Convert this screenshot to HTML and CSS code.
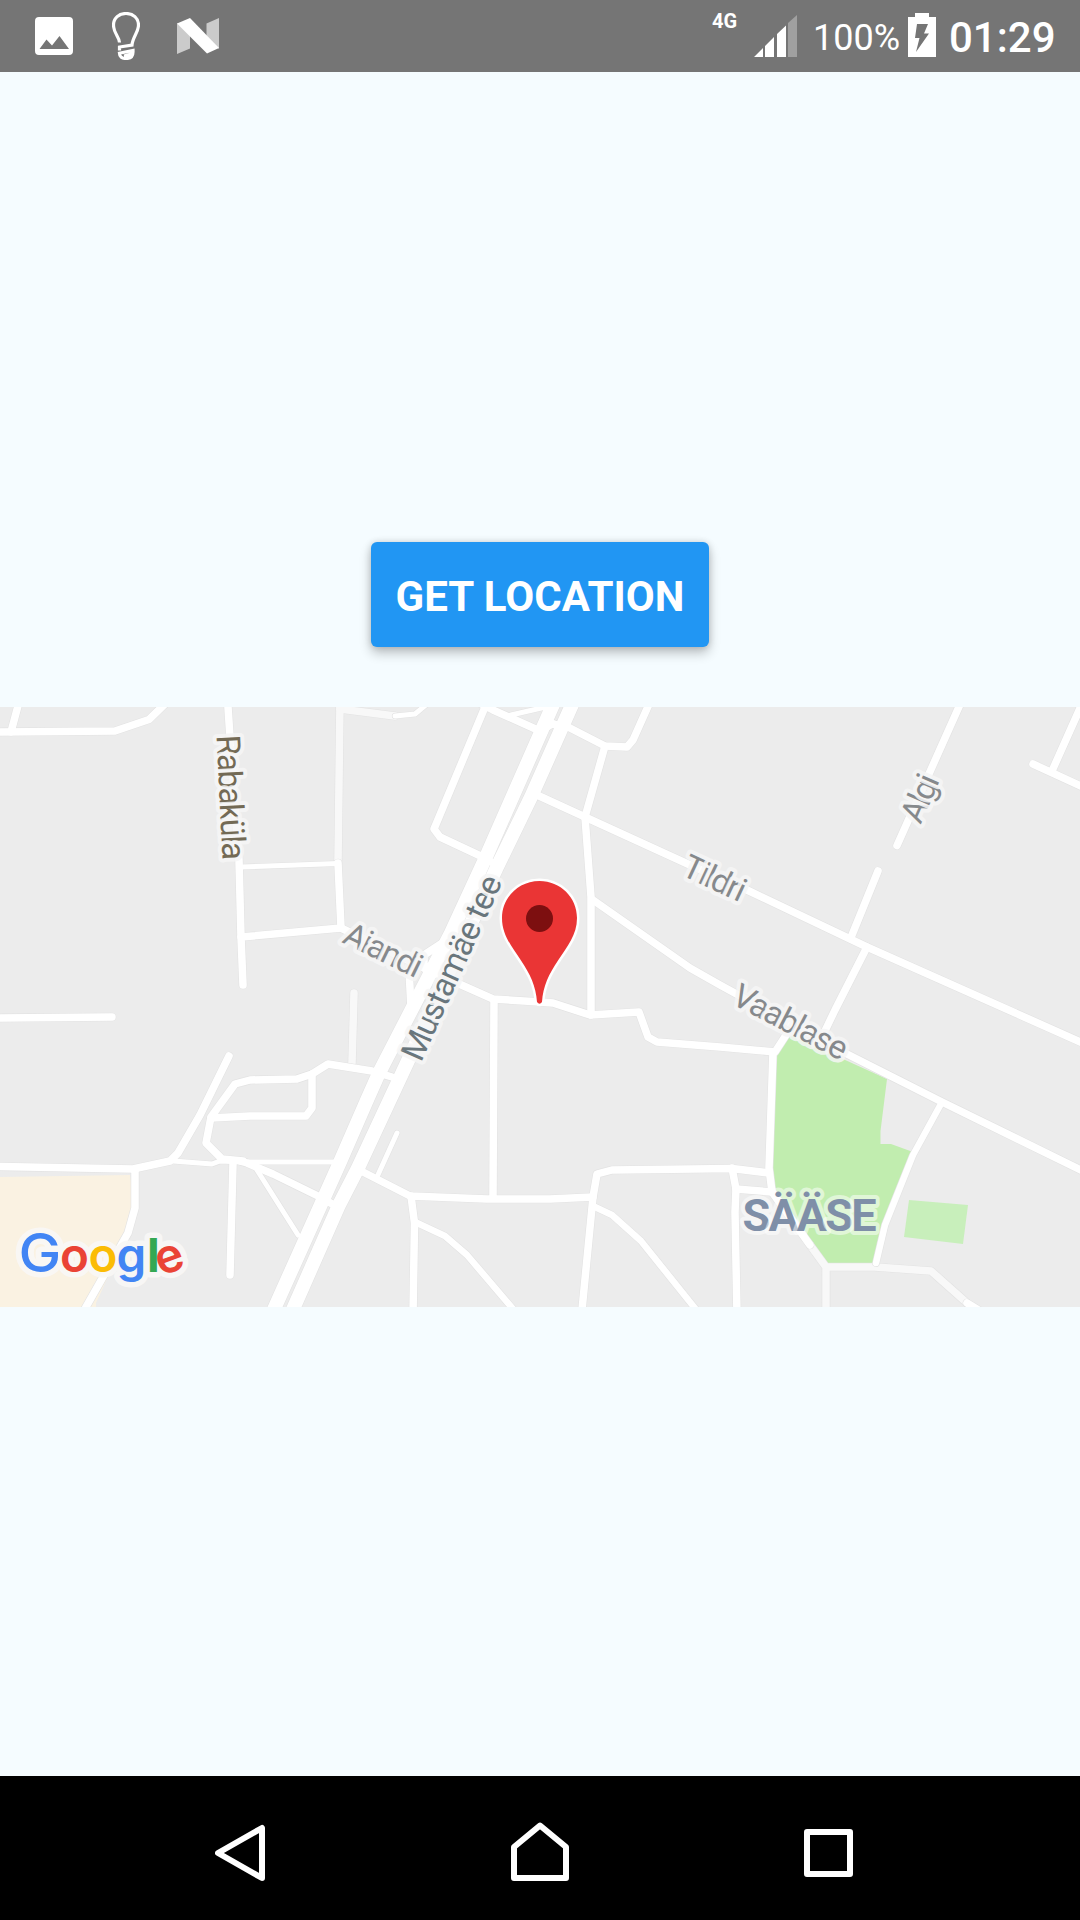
FILE: index.html
```
<!DOCTYPE html>
<html lang="en">
<head>
<meta charset="utf-8">
<title>Get Location</title>
<link rel="stylesheet" href="styles.css">
</head>
<body>
<div class="screen">
  <header class="status">
    <div class="status-left">
      <svg class="ic-photo" viewBox="0 0 38 38"><path fill-rule="evenodd" d="M4 0H34Q38 0 38 4V34Q38 38 34 38H4Q0 38 0 34V4Q0 0 4 0ZM4.500 32H34L24.500 19L17 28.500L11.500 22.500Z"/></svg>
      <svg class="ic-bulb" viewBox="0 0 28 48"><path d="M7.500 30.500C7.500 25 1.500 21.500 1.500 13C1.500 6 7 1.500 14 1.500S26.500 6 26.500 13C26.500 20 20.500 25.500 20 33L7.500 35V38.500M6 41.500L21 38.500V40C21 44.500 18 46.500 14 46.500C10 46.500 7.500 44.500 7.500 41.500M12 44L21 41.500"/></svg>
      <svg class="ic-n" viewBox="0 0 42 36"><path class="dim" d="M0 5V36L13 30.500V16ZM29.500 5.500L42 0V31L29.500 18Z"/><path d="M0 5.500L13 0L42 30L30 35.500Z"/></svg>
    </div>
    <div class="status-right">
      <span class="net">4G</span>
      <svg class="ic-signal" viewBox="0 0 43 42"><path d="M0 42L9 33V42ZM11 42V31L20 22V42ZM23 42V19L32 10.500V42Z"/><path class="faded" d="M34 42V8L43 0V42Z"/></svg>
      <span class="pct">100%</span>
      <svg class="ic-batt" viewBox="0 0 28 44"><path d="M7 0H21V4H28V44H0V4H7Z"/><path class="bolt" d="M9 11H20L16 20.500H21L8 39L11.500 25H7Z"/></svg>
      <span class="clock">01:29</span>
    </div>
  </header>

  <main class="content">
    <button class="get-location">GET LOCATION</button>
    <svg class="map" viewBox="0 707 1080 600">
      <defs>
        <g id="roads-minor">
          <path d="M340 700L338 863"/><path d="M340 709L395 716"/><path d="M354 993L352 1063"/>
          <path d="M810 1245L826 1267V1315M826 1267H875L931 1271L967 1303"/>
        </g>
        <g id="roads">
          <path d="M-5 732L115 731L149 719.500L167 702"/><path d="M19 702L11 732"/>
          <path d="M227.500 700L230 737L239 860L241 937L243 985"/>
          <path class="thin" d="M241 867L338 863.500"/><path d="M338 863L341 928L241 937"/>
          <path d="M341 928L420 966L457 983L493 999L540 1002L553 1003L590 1015L639 1012L648 1037L657 1042L720 1047L775 1052L788 1032"/>
          <path class="thin" d="M395 716L415 714L427 704"/>
          <path d="M485 707L434 829L440 837L487 859"/>
          <path d="M474 700L493 710L540 731L552 724L568 727L605 746L627 747L633 740L650 702"/>
          <path class="thin" d="M511 715L550 706"/>
          <path d="M605 746L585 817"/>
          <path d="M537 795L585 817L690 865L747 890L867 947L1085 1044"/>
          <path d="M585 817L591 897V1015"/>
          <path d="M593 900L690 968L720 985L845 1053L942 1102L1085 1172"/>
          <path d="M962 700L897 845.500"/><path d="M878 871L852 935"/><path d="M867 947L835 1010L823 1035"/>
          <path d="M1033 764L1085 788M1052 771L1085 697"/>
          <path d="M494 1002L493 1197"/>
          <path d="M363 1172L410 1196L487 1199H550L593 1197"/>
          <path class="thin" d="M397 1133L377 1177"/>
          <path d="M411 1196L414.500 1223L413 1315"/>
          <path class="mid" d="M415 1222L445 1236L467 1255L519 1316"/>
          <path d="M581.500 1315L593 1197L597 1174L612 1170L732 1168.500L769 1173"/>
          <path class="mid" d="M595 1207L612 1215L641 1241L702 1317"/>
          <path d="M773 1052L769 1168L772 1192L810 1245"/>
          <path d="M732 1168L736 1189L735 1212L737 1315"/><path d="M736 1189L772 1192"/>
          <path class="mid" d="M942 1102L913 1155L885 1225L876 1263"/>
          <path d="M967 1303L985 1314"/>
          <path d="M-5 1018L112 1017"/>
          <path d="M-5 1166.500L133 1169L170 1161L178 1153L200 1115L229 1056"/>
          <path class="thin" d="M173 1161L212 1164L220 1161L247 1162H337"/>
          <path d="M243 1161L222 1159L206 1143L211 1117L235 1084L250 1080L297 1079L312 1074L328 1064L372 1071L392 1077"/>
          <path d="M211 1118L250 1116H306L312 1108V1074"/>
          <path d="M233 1163L230 1275"/>
          <path d="M240 1161L247 1163L273 1174L320 1197L334 1205"/>
          <path class="thin" d="M257 1170L298 1235"/>
          <path d="M135 1169V1208L128 1233L82 1314"/>
          <path d="M450 938L424 955V968L438 965"/><path d="M409 970L411 1007"/>
          <path class="highway" d="M561 687L552 707L486 857L451 933L414 1005L379 1073L367 1100L340 1162L275 1307L266 1327"/>
          <path class="highway" d="M580 687L571 707L531 797L497 867L406 1065L358 1168L339 1205L294 1307L285 1327"/>
          <path class="mid" d="M550 722L562 727M486 857L497 867M428 968L446 976"/>
        </g>
        <g id="wordmark">
          <text transform="translate(18.500 1272) scale(1.070 1)" class="blue cap">G</text>
          <text x="60" y="1272" class="red">o</text>
          <text x="88.500" y="1272" class="yellow">o</text>
          <text x="116.500" y="1272" class="blue">g</text>
          <text x="147" y="1271.500" class="green l">l</text>
          <text x="155.500" y="1272" class="red" transform="rotate(-20 170 1259)">e</text>
        </g>
      </defs>
      <rect class="land" y="707" width="1080" height="600"/>
      <path class="sand" d="M0 1177L130 1175L135 1208L128 1233L96 1303V1307H0Z"/>
      <path class="park" d="M788 1034L887 1079L880.500 1131V1144H891L913 1152L885 1225L876 1263H826L772 1192L769 1168L775 1052Z"/>
      <path class="lawn" d="M909 1200L968 1205L963 1244L904 1237Z"/>
      <use href="#roads-minor" class="casing"/><use href="#roads-minor" class="minor"/>
      <use href="#roads" class="casing"/><use href="#roads" class="major"/>
      <g class="street">
        <text class="brown" transform="translate(216.500 735.500) rotate(87.200)" textLength="125">Rabaküla</text>
        <text transform="translate(341 942) rotate(26)" textLength="83">Aiandi</text>
        <text class="slate" transform="translate(421 1063) rotate(-65.800)" textLength="199">Mustamäe tee</text>
        <text transform="translate(680 874.500) rotate(25)" textLength="66">Tildri</text>
        <text transform="translate(920.500 825) rotate(-66.500)" textLength="49">Algi</text>
        <text transform="translate(730 1003) rotate(27.500)" textLength="125">Vaablase</text>
      </g>
      <text class="district" x="742.500" y="1231" textLength="134">SÄÄSE</text>
      <path class="pin" d="M539.500 881C518.500 881 502 897.500 502 918C502 935 512 947 521 960.500C530 974 536 986 537 1002Q539.500 1005.500 542 1002C543 986 549 974 558 960.500C567 947 577 935 577 918C577 897.500 560.500 881 539.500 881Z"/>
      <circle class="pin-dot" cx="539.500" cy="918.500" r="13.500"/>
      <use href="#wordmark" class="halo"/><use href="#wordmark" class="letters"/>
    </svg>
  </main>

  <nav class="navbar">
    <svg viewBox="215 1822 50 60"><path d="M262 1828V1878L218 1853Z"/></svg>
    <svg class="home" viewBox="511 1822 58 60"><path d="M514 1878V1847L540 1825.500L566 1847V1878Z"/></svg>
    <svg viewBox="804 1822 49 60"><path d="M807 1832H850V1874H807Z"/></svg>
  </nav>
</div>
</body>
</html>
```
FILE: styles.css
```
* { box-sizing: border-box; }
body { margin: 0; font-family: Roboto, sans-serif; }
.screen { width: 1080px; height: 1920px; display: flex; flex-direction: column; background: #f5fcff; overflow: hidden; }

.status { height: 72px; background: #757575; color: #fff; display: flex; justify-content: space-between; padding: 0 25px 0 35px; }
.status svg { fill: #fff; display: block; flex: none; }
.status-left { display: flex; align-items: center; }
.ic-photo { width: 38px; height: 38px; }
.ic-bulb { width: 28px; height: 48px; margin-left: 39px; }
.status .ic-bulb { fill: none; stroke: #fff; stroke-width: 3.200; }
.ic-n { width: 42px; height: 36px; margin-left: 37px; }
.dim { fill: #cbcbcb; }
.status-right { display: flex; align-items: flex-start; line-height: 1; white-space: nowrap; }
.net { font-size: 20px; font-weight: 700; width: 42px; margin-top: 11px; }
.ic-signal { width: 43px; height: 42px; margin-top: 15px; }
.faded { fill: #a0a0a0; }
.pct { font-size: 36px; width: 96px; margin: 20px 0 0 16px; }
.ic-batt { width: 28px; height: 44px; margin: 13px 13px 0 -1px; }
.bolt { fill: #757575; }
.clock { font-size: 42px; font-weight: 500; width: 106px; margin-top: 17px; }

.content { flex: 1; display: flex; flex-direction: column; align-items: center; padding-top: 470px; }
.get-location {
  width: 338px; height: 105px; padding: 4px 0 0; border: 0; border-radius: 6px;
  background: #2196f3; color: #fff; font: 700 42px Roboto, sans-serif; letter-spacing: .05px; white-space: nowrap;
  box-shadow: 0 6px 12px rgba(0, 0, 0, .24), 0 0 7px rgba(0, 0, 0, .14);
}
.map { display: block; width: 1080px; height: 600px; margin-top: 60px; }
.land { fill: #ececec; }
.sand { fill: #faf2e2; }
.park { fill: #c1edaf; }
.lawn { fill: #c8efbb; }
#roads path, #roads-minor path { --w: 7.500px; fill: none; stroke-width: calc(var(--w) + var(--edge)); stroke-linecap: round; stroke-linejoin: round; }
#roads .thin { --w: 5px; }
#roads .mid { --w: 6.500px; }
#roads .highway { --w: 13.800px; }
.casing { --edge: 1.200px; stroke: #e3e3e3; }
.major { --edge: 0px; stroke: #fff; }
.minor { --edge: 0px; stroke: #f8f8f8; }

.street text { font-size: 33px; fill: #86898c; }
.street text, .district { stroke: rgba(246, 246, 246, .85); stroke-width: 8; stroke-linejoin: round; paint-order: stroke; }
.street .brown { fill: #736a55; }
.street .slate { fill: #69767c; }
.district { font-size: 45px; font-weight: 700; fill: #7f8fa8; stroke: rgba(255, 255, 255, .5); }
.pin { fill: #ea3535; stroke: #fff; stroke-width: 5; paint-order: stroke; }
.pin-dot { fill: #7d0f10; }

#wordmark text { font: 600 47.500px Inter, sans-serif; }
#wordmark .cap { font-size: 53.500px; font-weight: 500; }
#wordmark .l { font-size: 47px; font-weight: 700; }
.halo { stroke: #f9f8f6; stroke-width: 11; stroke-linejoin: round; opacity: .9; }
.letters { stroke: none; }
.blue { fill: #4285f4; }
.red { fill: #ea4335; }
.yellow { fill: #fbbc05; }
.green { fill: #34a853; }

.navbar { height: 144px; background: #000; display: flex; justify-content: space-between; align-items: flex-start; padding: 46px 227px 0 215px; }
.navbar svg { height: 60px; width: auto; fill: none; stroke: #fff; stroke-width: 6; stroke-linejoin: round; }
.navbar .home { margin-left: 10px; }
```
